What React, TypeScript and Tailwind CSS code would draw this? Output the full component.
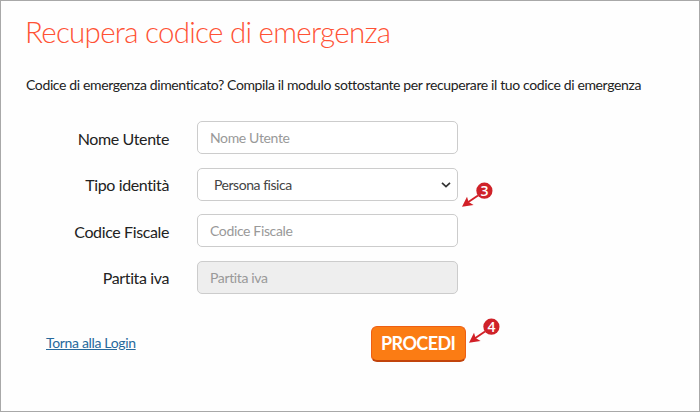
import React, { useState } from 'react';

interface Field {
  id: string;
  label: string;
  type: 'text' | 'select';
  disabled?: boolean;
}

const fields: Field[] = [
  { id: 'username', label: 'Nome Utente', type: 'text' },
  { id: 'identity', label: 'Tipo identità', type: 'select' },
  { id: 'taxCode', label: 'Codice Fiscale', type: 'text' },
  { id: 'vat', label: 'Partita iva', type: 'text', disabled: true },
];

const Marker: React.FC<{ value: number; className: string }> = ({ value, className }) => (
  <div className={`absolute w-8 h-7 ${className}`}>
    <svg viewBox="0 0 32 28" className="w-8 h-7" fill="none">
      <path d="M17 13.5 L7 20.2" stroke="#d22027" strokeWidth="1.9" />
      <path d="M1 24.8 L6 14.8 L7.6 19.9 L12.6 23 Z" fill="#d22027" />
      <circle cx="23.4" cy="8.7" r="8.1" fill="#cf2229" />
    </svg>
    <span className="absolute left-[15.5px] top-[0.5px] w-4 text-center font-['Open_Sans',sans-serif] text-[14px] leading-[16px] font-semibold text-white">
      {value}
    </span>
  </div>
);

const App: React.FC = () => {
  const [values, setValues] = useState<Record<string, string>>({});

  const handleChange = (id: string, value: string) => {
    setValues({ ...values, [id]: value });
  };

  return (
    <div className="relative w-[700px] h-[412px] bg-[#fefefe] border border-[#a8a8a8] pl-[25px] pt-[11px] font-['Lato',sans-serif] text-[#222]">
      <h1 className="-ml-px text-[29.5px] leading-[40px] font-light tracking-[-0.72px] text-[#ff5235] whitespace-nowrap">
        Recupera codice di emergenza
      </h1>
      <p className="mt-[23px] text-[14px] leading-[20px] tracking-[-0.37px] whitespace-nowrap">
        Codice di emergenza dimenticato? Compila il modulo sottostante per recuperare il tuo codice di emergenza
      </p>

      <form onSubmit={(e) => e.preventDefault()}>
        <div className="mt-[26px] flex flex-col gap-[13.5px]">
          {fields.map(field => (
            <div key={field.id} className="flex items-center h-[33px]">
              <label htmlFor={field.id} className="w-[143px] pt-[2px] text-right text-[16px] leading-[20px] tracking-[-0.38px]">
                {field.label}
              </label>
              {field.type === 'select' ? (
                <div className="relative ml-[28px] w-[261px] h-[33px]">
                  <select
                    id={field.id}
                    className="w-full h-full appearance-none rounded-[5px] border border-[#ccc] bg-white pl-4 text-[14px] tracking-[-0.46px] text-[#444]"
                  >
                    <option>Persona fisica</option>
                    <option>Persona giuridica</option>
                  </select>
                  <svg viewBox="0 0 10 6" className="absolute right-[7px] top-[14px] w-[10px] h-[6px]" fill="none">
                    <path d="M1 0.8 L5 4.6 L9 0.8" stroke="#333" strokeWidth="1.7" />
                  </svg>
                </div>
              ) : (
                <input
                  id={field.id}
                  disabled={field.disabled}
                  placeholder={field.label}
                  value={values[field.id] || ''}
                  onChange={(e) => handleChange(field.id, e.target.value)}
                  className="ml-[28px] w-[261px] h-[33px] rounded-[5px] border border-[#ccc] bg-white px-3 text-[14px] tracking-[-0.36px] placeholder:text-[#999] disabled:bg-[#eee]"
                />
              )}
            </div>
          ))}
        </div>

        <div className="mt-[32px] flex items-start">
          <a href="#" className="ml-[20px] mt-[7px] text-[14px] leading-[20px] tracking-[-0.34px] text-[#27699c] underline">
            Torna alla Login
          </a>
          <button
            type="submit"
            className="ml-[235px] w-[95px] h-[36px] rounded-[6px] border border-[#ee5f14] border-b-2 border-b-[#c2440c] bg-[#fb7c14] text-[18px] leading-[32px] font-bold tracking-[-0.6px] text-white"
          >
            PROCEDI
          </button>
        </div>
      </form>

      <Marker value={3} className="left-[460px] top-[181px]" />
      <Marker value={4} className="left-[467px] top-[317px]" />
    </div>
  );
};

export default App;
